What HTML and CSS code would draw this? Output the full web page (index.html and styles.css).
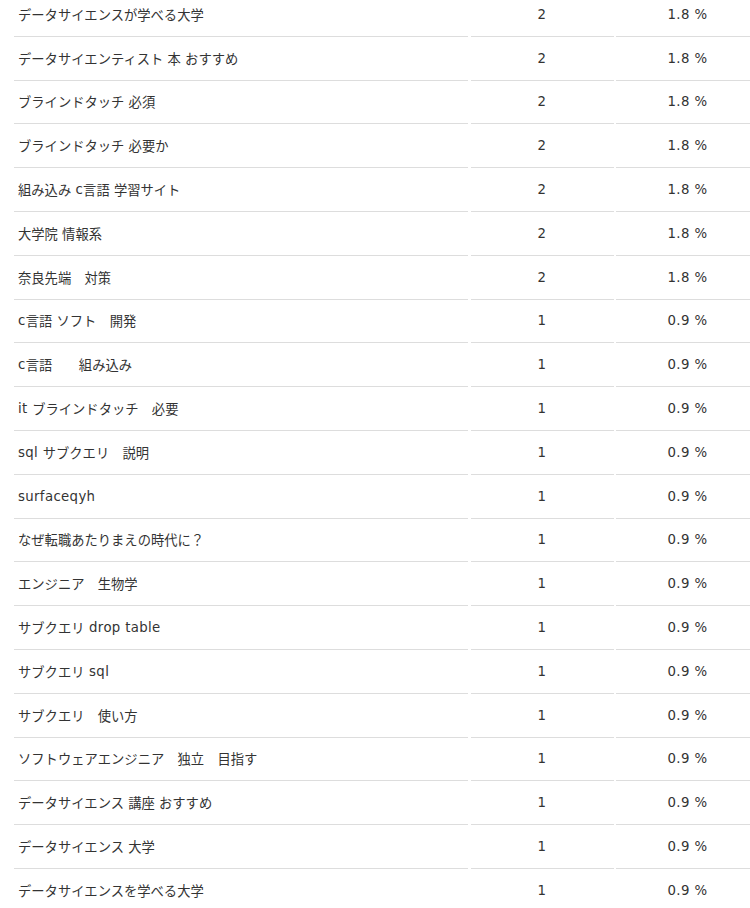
FILE: index.html
```html
<!DOCTYPE html>
<html lang="ja">
<head>
<meta charset="utf-8">
<title>キーワード</title>
<link rel="stylesheet" href="styles.css">
</head>
<body>
<div class="table">
  <div class="row"><div class="cell kw">データサイエンスが学べる大学</div><div class="cell num">2</div><div class="cell num">1.8 %</div></div>
  <div class="row"><div class="cell kw">データサイエンティスト 本 おすすめ</div><div class="cell num">2</div><div class="cell num">1.8 %</div></div>
  <div class="row"><div class="cell kw">ブラインドタッチ 必須</div><div class="cell num">2</div><div class="cell num">1.8 %</div></div>
  <div class="row"><div class="cell kw">ブラインドタッチ 必要か</div><div class="cell num">2</div><div class="cell num">1.8 %</div></div>
  <div class="row"><div class="cell kw">組み込み <span class="en">c</span>言語 学習サイト</div><div class="cell num">2</div><div class="cell num">1.8 %</div></div>
  <div class="row"><div class="cell kw">大学院 情報系</div><div class="cell num">2</div><div class="cell num">1.8 %</div></div>
  <div class="row"><div class="cell kw">奈良先端　対策</div><div class="cell num">2</div><div class="cell num">1.8 %</div></div>
  <div class="row"><div class="cell kw"><span class="en">c</span>言語 ソフト　開発</div><div class="cell num">1</div><div class="cell num">0.9 %</div></div>
  <div class="row"><div class="cell kw"><span class="en">c</span>言語　　組み込み</div><div class="cell num">1</div><div class="cell num">0.9 %</div></div>
  <div class="row"><div class="cell kw"><span class="en">it </span>ブラインドタッチ　必要</div><div class="cell num">1</div><div class="cell num">0.9 %</div></div>
  <div class="row"><div class="cell kw"><span class="en">sql </span>サブクエリ　説明</div><div class="cell num">1</div><div class="cell num">0.9 %</div></div>
  <div class="row"><div class="cell kw"><span class="en">surfaceqyh</span></div><div class="cell num">1</div><div class="cell num">0.9 %</div></div>
  <div class="row"><div class="cell kw">なぜ転職あたりまえの時代に？</div><div class="cell num">1</div><div class="cell num">0.9 %</div></div>
  <div class="row"><div class="cell kw">エンジニア　生物学</div><div class="cell num">1</div><div class="cell num">0.9 %</div></div>
  <div class="row"><div class="cell kw">サブクエリ<span class="en"> drop table</span></div><div class="cell num">1</div><div class="cell num">0.9 %</div></div>
  <div class="row"><div class="cell kw">サブクエリ<span class="en"> sql</span></div><div class="cell num">1</div><div class="cell num">0.9 %</div></div>
  <div class="row"><div class="cell kw">サブクエリ　使い方</div><div class="cell num">1</div><div class="cell num">0.9 %</div></div>
  <div class="row"><div class="cell kw">ソフトウェアエンジニア　独立　目指す</div><div class="cell num">1</div><div class="cell num">0.9 %</div></div>
  <div class="row"><div class="cell kw">データサイエンス 講座 おすすめ</div><div class="cell num">1</div><div class="cell num">0.9 %</div></div>
  <div class="row"><div class="cell kw">データサイエンス 大学</div><div class="cell num">1</div><div class="cell num">0.9 %</div></div>
  <div class="row"><div class="cell kw">データサイエンスを学べる大学</div><div class="cell num">1</div><div class="cell num">0.9 %</div></div>
</div>
</body>
</html>
```
FILE: styles.css
```css
html, body {
  margin: 0;
  padding: 0;
  background: #fff;
  overflow: hidden;
}
body {
  font-family: "DejaVu Sans", "Noto Sans CJK JP", sans-serif;
  font-size: 13.3px;
  color: #333;
}
.table {
  margin: -7px 0 0 14px;
  width: 745px;
}
.row {
  display: grid;
  grid-template-columns: 454px 143px 143px;
  column-gap: 2.5px;
}
.cell {
  height: 43.8px;
  box-sizing: border-box;
  border-bottom: 1px solid #ddd;
  display: flex;
  align-items: center;
  white-space: pre;
}
.kw {
  padding-left: 4px;
}
.num {
  justify-content: center;
  letter-spacing: 0.4px;
}
.en {
  letter-spacing: 0.35px;
}
```
